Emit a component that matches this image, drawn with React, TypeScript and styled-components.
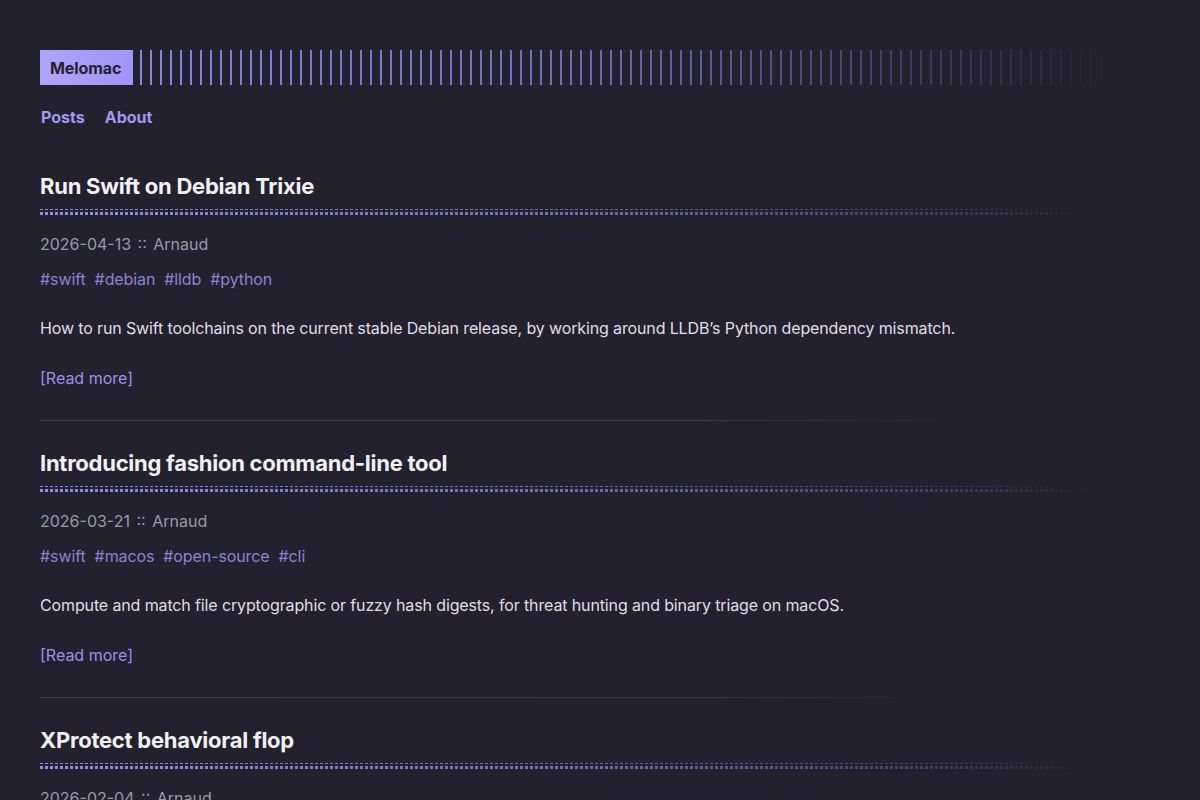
import React from 'react';
import styled, { createGlobalStyle } from 'styled-components';

const GlobalStyle = createGlobalStyle`
  html, body {
    margin: 0;
    padding: 0;
    background: #22212d;
  }
  body {
    font-family: Inter, "Noto Sans", sans-serif;
    color: #dedde3;
    -webkit-font-smoothing: antialiased;
  }
`;

const Page = styled.div`
  height: 100vh;
  padding: 50px 40px 0;
  box-sizing: border-box;
  background: #22212d;
  overflow: hidden;
`;

const Header = styled.header`
  display: flex;
  flex-direction: column;
  gap: 20px;
`;

const LogoRow = styled.div`
  display: flex;
  align-items: stretch;
  height: 35px;
  gap: 7px;
`;

const Logo = styled.a`
  display: flex;
  align-items: center;
  padding: 0 12px 0 10px;
  background: linear-gradient(90deg, #b0a4fb, #a194f5);
  color: #24212f;
  font-weight: 700;
  font-size: 16px;
  letter-spacing: -0.1px;
  text-decoration: none;
`;

const Stripes = styled.div`
  flex: 1;
  margin-right: 45px;
  background-image: repeating-linear-gradient(
    90deg,
    #8e82e6 0 2px,
    transparent 2px 10px
  );
  mask-image: linear-gradient(90deg, #000 0%, rgba(0, 0, 0, 0.75) 45%, rgba(0, 0, 0, 0.2) 85%, transparent 100%);
  -webkit-mask-image: linear-gradient(90deg, #000 0%, rgba(0, 0, 0, 0.75) 45%, rgba(0, 0, 0, 0.2) 85%, transparent 100%);
`;

const Nav = styled.nav`
  display: flex;
  gap: 19px;
  line-height: 24px;
`;

const NavLink = styled.a`
  color: #a497f0;
  font-weight: 700;
  font-size: 16px;
  text-decoration: none;
  padding-left: 1px;
`;

const Posts = styled.main`
  margin-top: 42px;
  display: flex;
  flex-direction: column;
`;

const Post = styled.article`
  display: flex;
  flex-direction: column;
`;

const Title = styled.h2`
  margin: 0;
  font-size: 22px;
  line-height: 30px;
  font-weight: 700;
  color: #f2f1f5;
  letter-spacing: -0.25px;
`;

const Dots = styled.div`
  margin-top: 8px;
  height: 8px;
  margin-right: 60px;
  background-color: #968be6;
  background-image: linear-gradient(90deg, #22212d 2px, transparent 2px),
    linear-gradient(180deg, #22212d 2px, transparent 2px);
  background-size: 5px 5px;
  background-position: -2px 1px;
  mask-image: linear-gradient(90deg, #000 0%, rgba(0, 0, 0, 0.7) 50%, rgba(0, 0, 0, 0.25) 85%, transparent 100%);
  -webkit-mask-image: linear-gradient(90deg, #000 0%, rgba(0, 0, 0, 0.7) 50%, rgba(0, 0, 0, 0.25) 85%, transparent 100%);
`;

const Meta = styled.div`
  margin-top: 15px;
  font-size: 16px;
  line-height: 24px;
  color: #9b99a6;
  word-spacing: 2px;
`;

const Tags = styled.div`
  margin-top: 11px;
  display: flex;
  gap: 9px;
  font-size: 16px;
  line-height: 24px;
  letter-spacing: -0.1px;
`;

const Tag = styled.a`
  color: #8d83d4;
  text-decoration: none;
`;

const Summary = styled.p`
  margin: 25px 0 0;
  font-size: 16px;
  line-height: 24px;
  color: #e0dfe6;
  letter-spacing: -0.13px;
`;

const ReadMore = styled.a`
  margin-top: 26px;
  align-self: flex-start;
  font-size: 16px;
  line-height: 24px;
  color: #9d91ea;
  text-decoration: none;
`;

const Separator = styled.hr`
  margin: 30px 200px 27px 0;
  border: 0;
  height: 1px;
  background: linear-gradient(90deg, #3c3a48 0%, #3a3846 70%, #2a2935 90%, transparent 100%);
`;

type PostData = {
  title: string;
  date: string;
  author: string;
  tags: string[];
  summary: string;
};

const posts: PostData[] = [
  {
    title: 'Run Swift on Debian Trixie',
    date: '2026-04-13',
    author: 'Arnaud',
    tags: ['swift', 'debian', 'lldb', 'python'],
    summary:
      'How to run Swift toolchains on the current stable Debian release, by working around LLDB\u2019s Python dependency mismatch.',
  },
  {
    title: 'Introducing fashion command-line tool',
    date: '2026-03-21',
    author: 'Arnaud',
    tags: ['swift', 'macos', 'open-source', 'cli'],
    summary:
      'Compute and match file cryptographic or fuzzy hash digests, for threat hunting and binary triage on macOS.',
  },
  {
    title: 'XProtect behavioral flop',
    date: '2026-02-04',
    author: 'Arnaud',
    tags: ['macos', 'security', 'xprotect'],
    summary: 'A look at the behavioral detection rules shipped with XProtect.',
  },
];

const App = () => {
  return (
    <>
      <GlobalStyle />
      <Page>
        <Header>
          <LogoRow>
            <Logo href="#">Melomac</Logo>
            <Stripes />
          </LogoRow>
          <Nav>
            <NavLink href="#">Posts</NavLink>
            <NavLink href="#">About</NavLink>
          </Nav>
        </Header>
        <Posts>
          {posts.map((p, i) => (
            <React.Fragment key={p.title}>
              <Post>
                <Title>{p.title}</Title>
                <Dots />
                <Meta>
                  {p.date} :: {p.author}
                </Meta>
                <Tags>
                  {p.tags.map(t => (
                    <Tag key={t} href="#">#{t}</Tag>
                  ))}
                </Tags>
                <Summary>{p.summary}</Summary>
                <ReadMore href="#">[Read more]</ReadMore>
              </Post>
              {i < posts.length - 1 && <Separator />}
            </React.Fragment>
          ))}
        </Posts>
      </Page>
    </>
  );
};

export default App;
